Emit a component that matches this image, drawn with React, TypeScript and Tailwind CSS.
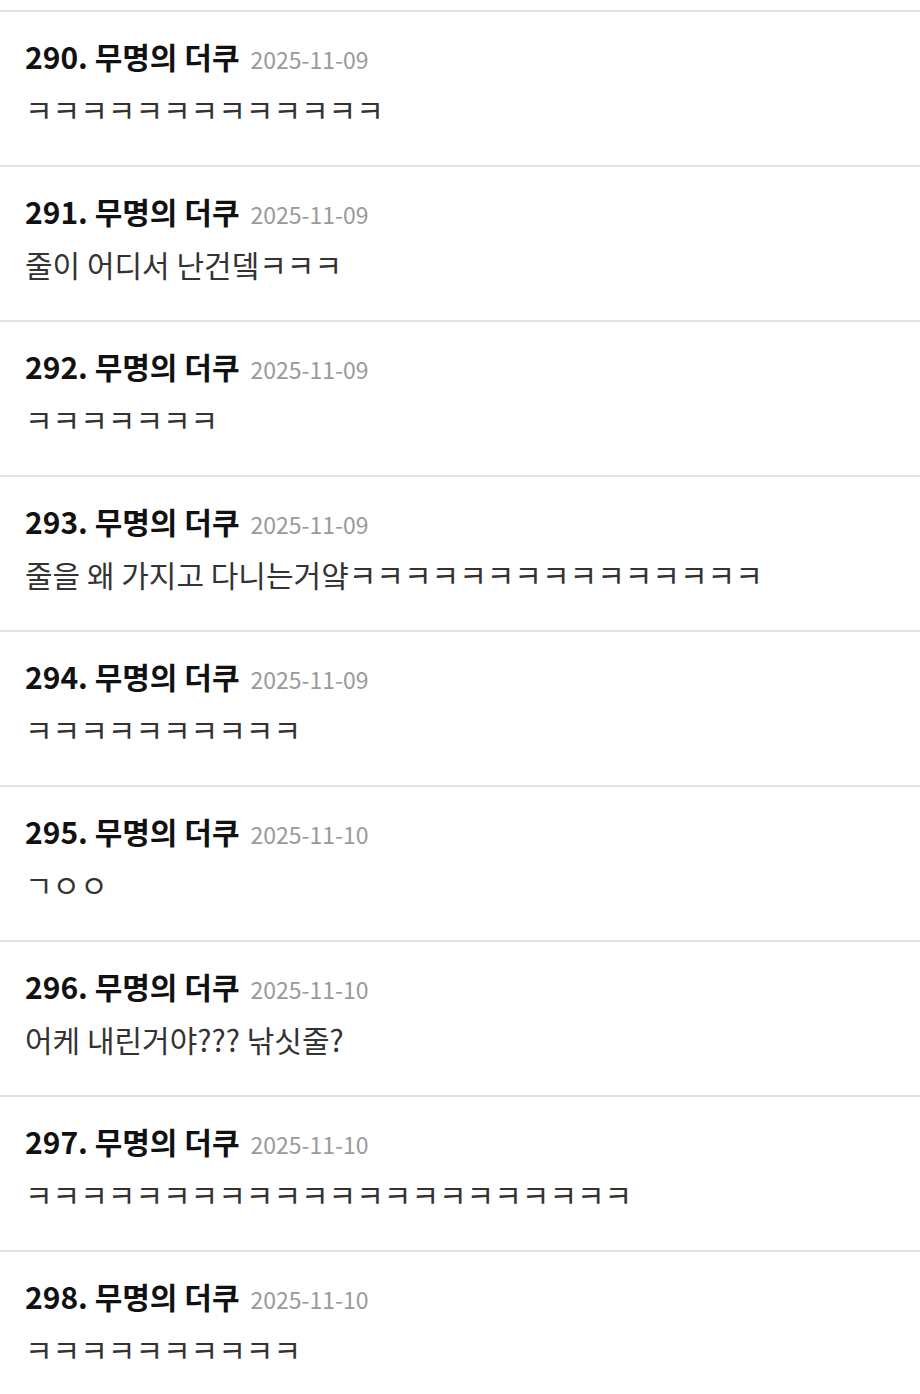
const comments = [
  { no: 290, date: "2025-11-09", text: "ㅋㅋㅋㅋㅋㅋㅋㅋㅋㅋㅋㅋㅋ" },
  { no: 291, date: "2025-11-09", text: "줄이 어디서 난건뎈ㅋㅋㅋ" },
  { no: 292, date: "2025-11-09", text: "ㅋㅋㅋㅋㅋㅋㅋ" },
  { no: 293, date: "2025-11-09", text: "줄을 왜 가지고 다니는거얔ㅋㅋㅋㅋㅋㅋㅋㅋㅋㅋㅋㅋㅋㅋㅋ" },
  { no: 294, date: "2025-11-09", text: "ㅋㅋㅋㅋㅋㅋㅋㅋㅋㅋ" },
  { no: 295, date: "2025-11-10", text: "ㄱㅇㅇ" },
  { no: 296, date: "2025-11-10", text: "어케 내린거야??? 낚싯줄?" },
  { no: 297, date: "2025-11-10", text: "ㅋㅋㅋㅋㅋㅋㅋㅋㅋㅋㅋㅋㅋㅋㅋㅋㅋㅋㅋㅋㅋㅋ" },
  { no: 298, date: "2025-11-10", text: "ㅋㅋㅋㅋㅋㅋㅋㅋㅋㅋ" },
];

const App = () => {
  return (
    <div className="min-h-screen bg-white pt-[10px] font-['Noto_Sans_CJK_KR','Noto_Sans',sans-serif]">
      {comments.map((c) => (
        <div key={c.no} className="border-t-2 border-[#e2e2e2] px-[25px] pt-[24px] pb-[36px]">
          {/* Header */}
          <div className="flex items-baseline gap-[11px] h-[40px] leading-[40px]">
            <span className="text-[30px] font-bold text-[#111]">
              {c.no}. 무명의 더쿠
            </span>
            <span className="text-[23px] text-[#9a9a9a]">{c.date}</span>
          </div>
          {/* Body */}
          <p className="mt-[13px] h-[40px] leading-[40px] text-[30px] text-[#333] whitespace-nowrap">
            {c.text}
          </p>
        </div>
      ))}
    </div>
  );
};

export default App;
